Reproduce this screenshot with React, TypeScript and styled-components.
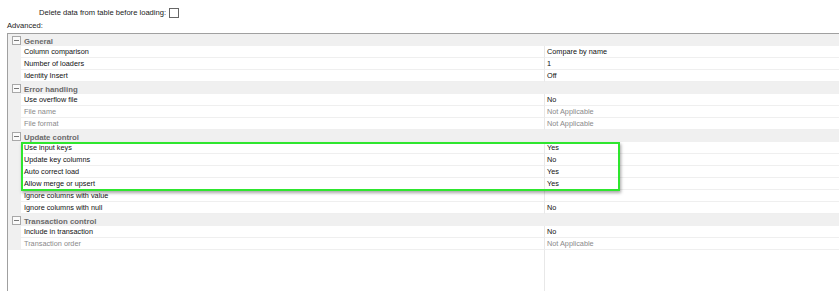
import styled, { createGlobalStyle } from "styled-components";

type Item = { name: string; value: string; disabled?: boolean };
type Group = { title: string; items: Item[] };

const groups: Group[] = [
  {
    title: "General",
    items: [
      { name: "Column comparison", value: "Compare by name" },
      { name: "Number of loaders", value: "1" },
      { name: "Identity Insert", value: "Off" },
    ],
  },
  {
    title: "Error handling",
    items: [
      { name: "Use overflow file", value: "No" },
      { name: "File name", value: "Not Applicable", disabled: true },
      { name: "File format", value: "Not Applicable", disabled: true },
    ],
  },
  {
    title: "Update control",
    items: [
      { name: "Use input keys", value: "Yes" },
      { name: "Update key columns", value: "No" },
      { name: "Auto correct load", value: "Yes" },
      { name: "Allow merge or upsert", value: "Yes" },
      { name: "Ignore columns with value", value: "" },
      { name: "Ignore columns with null", value: "No" },
    ],
  },
  {
    title: "Transaction control",
    items: [
      { name: "Include in transaction", value: "No" },
      { name: "Transaction order", value: "Not Applicable", disabled: true },
    ],
  },
];

const GlobalStyle = createGlobalStyle`
  html, body {
    margin: 0;
    padding: 0;
    background: #ffffff;
    overflow: hidden;
  }
  body {
    font-family: "Liberation Sans", Arial, sans-serif;
    color: #000;
  }
`;

export default function App() {
  return (
    <>
      <GlobalStyle />
      <Page>
        <TopLine>
          <span>Delete data from table before loading:</span>
          <CheckBox />
        </TopLine>
        <SectionLabel>Advanced:</SectionLabel>
        <PropertyGrid>
          {groups.map((g) => (
            <GroupBlock key={g.title}>
              <GroupHeader>
                <Toggle>
                  <svg width="9" height="9" viewBox="0 0 9 9">
                    <rect x="0.5" y="0.5" width="8" height="8" fill="#fafafa" stroke="#a8a8a8" />
                    <line x1="2" y1="4.5" x2="7" y2="4.5" stroke="#777" />
                  </svg>
                </Toggle>
                <GroupTitle>{g.title}</GroupTitle>
              </GroupHeader>
              {g.items.map((it) => (
                <Row key={it.name}>
                  <Margin />
                  <NameCell $disabled={it.disabled}>{it.name}</NameCell>
                  <ValueCell $disabled={it.disabled}>{it.value}</ValueCell>
                </Row>
              ))}
            </GroupBlock>
          ))}
          <Filler>
            <span />
            <span />
          </Filler>
          <Highlight />
        </PropertyGrid>
      </Page>
    </>
  );
}

const Page = styled.div`
  display: flex;
  flex-direction: column;
  width: 839px;
  height: 291px;
  padding: 6px 0 0 7px;
  box-sizing: border-box;
`;

const TopLine = styled.div`
  display: flex;
  align-items: center;
  gap: 3px;
  padding-left: 32px;
  height: 13px;
  font-size: 7.6px;
  color: #1a1a1a;
`;

const CheckBox = styled.span`
  display: inline-block;
  width: 8px;
  height: 8px;
  border: 1px solid #666;
  background: #fff;
`;

const SectionLabel = styled.div`
  height: 14px;
  line-height: 14px;
  font-size: 7.6px;
  color: #1a1a1a;
`;

const PropertyGrid = styled.div`
  position: relative;
  display: flex;
  flex-direction: column;
  flex: 1;
  margin-right: -4px;
  border-top: 1px solid #a0a0a0;
  border-left: 1px solid #a0a0a0;
  font-size: 7.3px;
`;

const GroupBlock = styled.div`
  display: flex;
  flex-direction: column;
`;

const GroupHeader = styled.div`
  display: flex;
  align-items: center;
  height: 12px;
  background: #f0f0f0;
`;

const Toggle = styled.span`
  display: flex;
  width: 16px;
  justify-content: center;
  padding-left: 1px;
  box-sizing: border-box;
`;

const GroupTitle = styled.span`
  font-weight: bold;
  color: #6a6a6a;
  font-size: 7.8px;
  padding-top: 2px;
`;

const Row = styled.div`
  display: grid;
  grid-template-columns: 13px 523px 1fr;
  height: 12px;
`;

const Margin = styled.span`
  background: #f0f0f0;
`;

const NameCell = styled.span<{ $disabled?: boolean }>`
  padding-left: 3px;
  padding-top: 1px;
  line-height: 10px;
  border-bottom: 1px solid #efefef;
  color: ${(p) => (p.$disabled ? "#8a8a8a" : "#111")};
  white-space: nowrap;
`;

const ValueCell = styled(NameCell)`
  border-left: 1px solid #e8e8e8;
  padding-left: 2px;
`;

const Filler = styled.div`
  display: grid;
  grid-template-columns: 536px 1fr;
  flex: 1;

  span:last-child {
    border-left: 1px solid #e8e8e8;
  }
`;

const Highlight = styled.div`
  position: absolute;
  left: 13px;
  top: 108px;
  width: 595px;
  height: 45px;
  border: 2px solid #2ee62e;
  box-shadow: 1px 2px 3px rgba(0, 0, 0, 0.35);
  pointer-events: none;
`;
